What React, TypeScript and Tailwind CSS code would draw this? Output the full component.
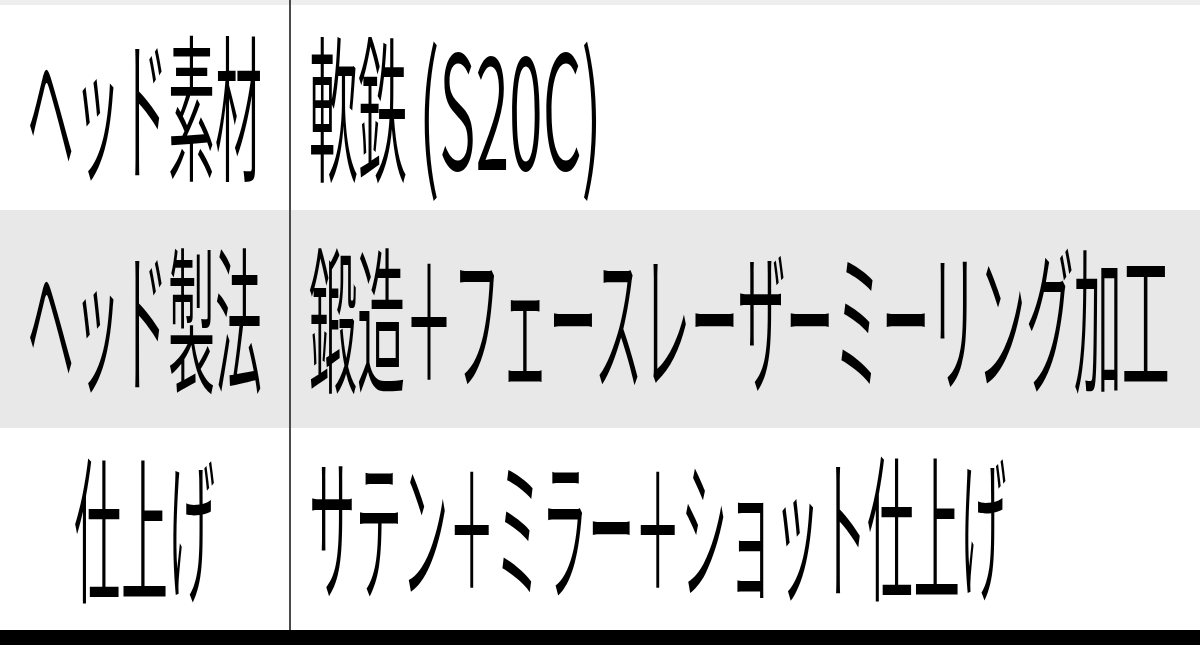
import React from 'react';

type Row = {
  label: string;
  value: React.ReactNode;
  valueClass: string;
  height: string;
  bg: string;
};

const rows: Row[] = [
  {
    label: 'ヘッド素材',
    value: (
      <>
        軟鉄
        <span className="inline-block ml-[12px] scale-x-[1.25] origin-left">(S20C)</span>
      </>
    ),
    valueClass: 'text-[49px] scale-y-[3.22]',
    height: 'h-[205px]',
    bg: 'bg-white',
  },
  {
    label: 'ヘッド製法',
    value: '鍛造＋フェースレーザーミーリング加工',
    valueClass: 'text-[48px] scale-y-[3.29]',
    height: 'h-[218px]',
    bg: 'bg-[#e8e8e8]',
  },
  {
    label: '仕上げ',
    value: 'サテン＋ミラー＋ショット仕上げ',
    valueClass: 'text-[46.5px] scale-y-[3.4]',
    height: 'h-[202px]',
    bg: 'bg-white',
  },
];

const SpecRow: React.FC<{ row: Row }> = ({ row }) => (
  <div className={`flex ${row.height} ${row.bg}`}>
    <div className="w-[291px] shrink-0 border-r-2 border-[#4a4a4a] flex items-center justify-center pb-[14px]">
      <span className="inline-block whitespace-nowrap text-[47px] leading-none font-[350] scale-y-[3.36]">
        {row.label}
      </span>
    </div>
    <div className="flex-1 pl-[18px] flex items-center pb-[14px]">
      <span className={`inline-block whitespace-nowrap leading-none font-[350] ${row.valueClass}`}>
        {row.value}
      </span>
    </div>
  </div>
);

export default function App() {
  return (
    <div
      className="w-[1200px] h-[645px] overflow-hidden bg-white text-black flex flex-col"
      style={{ fontFamily: '"Noto Sans CJK JP", "Noto Sans", sans-serif' }}
    >
      <div className="flex h-[5px] bg-[#eeeeee]">
        <div className="w-[291px] border-r-2 border-[#4a4a4a]" />
      </div>
      {rows.map((row) => (
        <SpecRow key={row.label} row={row} />
      ))}
      <div className="h-[15px] bg-black" />
    </div>
  );
}
